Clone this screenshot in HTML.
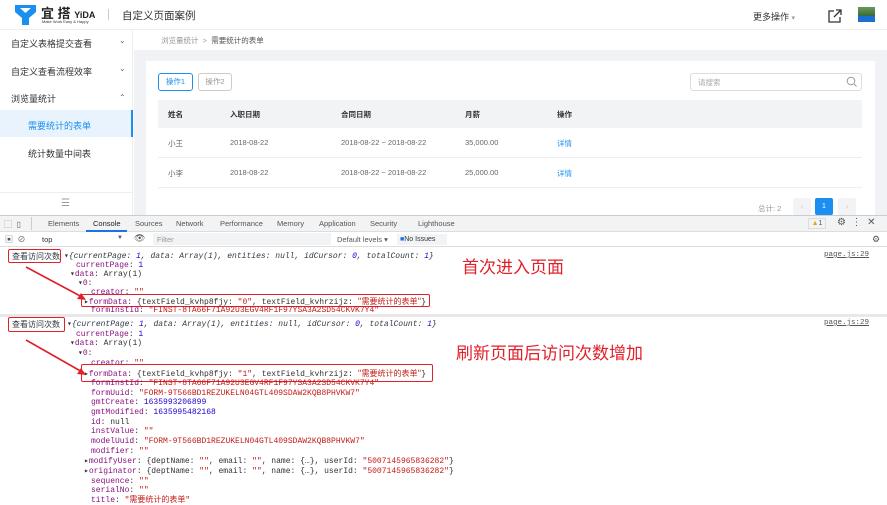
<!DOCTYPE html><html><head><meta charset="utf-8"><style>
*{margin:0;padding:0;box-sizing:border-box}
body{width:887px;height:500px;overflow:hidden;position:relative;background:#fff;font-family:"Liberation Sans","Noto Sans CJK SC",sans-serif;color:#333}
.a{position:absolute;white-space:nowrap}
.cn{font-size:9px}
.m{font-family:"Liberation Mono","DejaVu Sans Mono",monospace;font-size:8px;line-height:9px}
.k{color:#881280}.s{color:#c41a16}.n{color:#1c00cf}.g{color:#303942}
.box{position:absolute;border:1.5px solid #e0202a;border-radius:2px}
</style></head><body>
<div class="a" style="left:0;top:0;width:887px;height:30px;background:#fff;border-bottom:1px solid #eee"></div>
<svg class="a" style="left:15px;top:5px" width="21" height="20"><path d="M0 0h21v7l-7 6v7h-7v-7L0 7z" fill="#1b8ff0"/><path d="M5 3h11l-5.5 5z" fill="#fff"/></svg>
<div class="a" style="left:41px;top:3px;font-size:13px;font-weight:bold;color:#222">宜 搭 <span style="font-size:9px">YiDA</span></div>
<div class="a" style="left:42px;top:19px;font-size:4px;color:#333">Make Work Easy &amp; Happy</div>
<div class="a" style="left:108px;top:9px;width:1px;height:11px;background:#ccc"></div>
<div class="a" style="left:122px;top:8px;font-size:10.5px;color:#333">自定义页面案例</div>
<div class="a cn" style="left:753px;top:10px;color:#333">更多操作 <span style="color:#999;font-size:7px">▾</span></div>
<svg class="a" style="left:828px;top:9px" width="14" height="14"><path d="M6 2H1v11h11V8M8 1h5v5M13 1L6 8" fill="none" stroke="#333" stroke-width="1.3"/></svg>
<div class="a" style="left:858px;top:7px;width:17px;height:15px;background:linear-gradient(#6a9a5a,#3a6a3a 60%,#1b6fd0 60%)"></div>
<div class="a" style="left:0;top:30px;width:133px;height:185px;background:#fff;border-right:1px solid #eee"></div>
<div class="a cn" style="left:11px;top:37px">自定义表格提交查看</div><div class="a" style="left:119px;top:36px;font-size:8px;color:#666">⌄</div>
<div class="a cn" style="left:11px;top:65px">自定义查看流程效率</div><div class="a" style="left:119px;top:64px;font-size:8px;color:#666">⌄</div>
<div class="a cn" style="left:11px;top:92px">浏览量统计</div><div class="a" style="left:119px;top:93px;font-size:8px;color:#666">⌃</div>
<div class="a" style="left:0;top:110px;width:133px;height:27px;background:#e8f3fd;border-right:2px solid #1b8ff0"></div>
<div class="a cn" style="left:28px;top:119px;color:#1b8ff0">需要统计的表单</div>
<div class="a cn" style="left:28px;top:147px">统计数量中间表</div>
<div class="a" style="left:0;top:192px;width:133px;height:1px;background:#eee"></div>
<div class="a" style="left:61px;top:198px;font-size:10px;color:#999">☰</div>
<div class="a" style="left:134px;top:30px;width:753px;height:185px;background:#f0f2f5"></div>
<div class="a" style="left:134px;top:30px;width:753px;height:20px;background:#fff"></div>
<div class="a" style="left:161px;top:35px;font-size:7.5px;color:#999">浏览量统计 &nbsp;&gt;&nbsp; <span style="color:#555">需要统计的表单</span></div>
<div class="a" style="left:146px;top:61px;width:729px;height:154px;background:#fff"></div>
<div class="a" style="left:158px;top:73px;width:35px;height:18px;border:1px solid #1b8ff0;border-radius:3px;font-size:7.5px;color:#1b8ff0;text-align:center;line-height:16px">操作1</div>
<div class="a" style="left:198px;top:73px;width:34px;height:18px;border:1px solid #ccc;border-radius:3px;font-size:7.5px;color:#999;text-align:center;line-height:16px">操作2</div>
<div class="a" style="left:690px;top:73px;width:172px;height:18px;border:1px solid #ddd;border-radius:3px"></div>
<div class="a" style="left:698px;top:77px;font-size:7.5px;color:#aaa">请搜索</div>
<svg class="a" style="left:846px;top:76px" width="11" height="11"><circle cx="5" cy="5" r="3.8" fill="none" stroke="#999"/><path d="M8 8l2.5 2.5" stroke="#999"/></svg>
<div class="a" style="left:158px;top:100px;width:704px;height:28px;background:#f2f3f5"></div>
<div class="a" style="left:158px;top:157px;width:704px;height:1px;background:#eee"></div>
<div class="a" style="left:158px;top:187px;width:704px;height:1px;background:#eee"></div>
<div class="a" style="left:168px;top:109px;font-size:7.5px;font-weight:bold;color:#333">姓名</div>
<div class="a" style="left:230px;top:109px;font-size:7.5px;font-weight:bold;color:#333">入职日期</div>
<div class="a" style="left:341px;top:109px;font-size:7.5px;font-weight:bold;color:#333">合同日期</div>
<div class="a" style="left:465px;top:109px;font-size:7.5px;font-weight:bold;color:#333">月薪</div>
<div class="a" style="left:557px;top:109px;font-size:7.5px;font-weight:bold;color:#333">操作</div>
<div class="a" style="left:168px;top:138px;font-size:7.5px;color:#666">小王</div>
<div class="a" style="left:230px;top:138px;font-size:7.5px;color:#666">2018-08-22</div>
<div class="a" style="left:341px;top:138px;font-size:7.5px;color:#666">2018-08-22 ~ 2018-08-22</div>
<div class="a" style="left:465px;top:138px;font-size:7.5px;color:#666">35,000.00</div>
<div class="a" style="left:557px;top:138px;font-size:7.5px;color:#1b8ff0">详情</div>
<div class="a" style="left:168px;top:168px;font-size:7.5px;color:#666">小李</div>
<div class="a" style="left:230px;top:168px;font-size:7.5px;color:#666">2018-08-22</div>
<div class="a" style="left:341px;top:168px;font-size:7.5px;color:#666">2018-08-22 ~ 2018-08-22</div>
<div class="a" style="left:465px;top:168px;font-size:7.5px;color:#666">25,000.00</div>
<div class="a" style="left:557px;top:168px;font-size:7.5px;color:#1b8ff0">详情</div>
<div class="a" style="left:758px;top:203px;font-size:7.5px;color:#999">总计: 2</div>
<div class="a" style="left:793px;top:198px;width:18px;height:17px;background:#f2f3f5;border-radius:2px;color:#ccc;font-size:8px;text-align:center;line-height:17px">‹</div>
<div class="a" style="left:815px;top:198px;width:18px;height:17px;background:#1b8ff0;border-radius:2px;color:#fff;font-size:7px;text-align:center;line-height:17px">1</div>
<div class="a" style="left:838px;top:198px;width:18px;height:17px;background:#f2f3f5;border-radius:2px;color:#ccc;font-size:8px;text-align:center;line-height:17px">›</div>
<div class="a" style="left:0;top:215px;width:887px;height:17px;background:#f1f3f4;border-top:1px solid #ccc;border-bottom:1px solid #ddd"></div>
<div class="a" style="left:4px;top:219px;font-size:8px;color:#666">⬚ &nbsp;▯</div>
<div class="a" style="left:31px;top:217px;width:1px;height:13px;background:#ccc"></div>
<div class="a" style="left:48px;top:219px;font-size:7.5px;color:#555">Elements</div>
<div class="a" style="left:93px;top:219px;font-size:7.5px;color:#222">Console</div>
<div class="a" style="left:86px;top:230px;width:41px;height:2px;background:#1a73e8"></div>
<div class="a" style="left:135px;top:219px;font-size:7.5px;color:#555">Sources</div>
<div class="a" style="left:176px;top:219px;font-size:7.5px;color:#555">Network</div>
<div class="a" style="left:220px;top:219px;font-size:7.5px;color:#555">Performance</div>
<div class="a" style="left:277px;top:219px;font-size:7.5px;color:#555">Memory</div>
<div class="a" style="left:319px;top:219px;font-size:7.5px;color:#555">Application</div>
<div class="a" style="left:370px;top:219px;font-size:7.5px;color:#555">Security</div>
<div class="a" style="left:418px;top:219px;font-size:7.5px;color:#555">Lighthouse</div>
<div class="a" style="left:808px;top:218px;width:18px;height:11px;border:1px solid #ddd;font-size:7px;color:#555;text-align:center;line-height:9px"><span style="color:#e8a800">▲</span>1</div>
<div class="a" style="left:837px;top:217px;font-size:10px;color:#555">⚙ &nbsp;⋮ &nbsp;✕</div>
<div class="a" style="left:0;top:232px;width:887px;height:15px;background:#fff;border-bottom:1px solid #ddd"></div>
<div class="a" style="left:5px;top:234px;font-size:8px;color:#555">▣ &nbsp;⊘</div>
<div class="a" style="left:42px;top:235px;font-size:7.5px;color:#333">top</div>
<div class="a" style="left:117px;top:235px;font-size:6px;color:#555">▼</div>
<div class="a" style="left:134px;top:233px;font-size:9px;color:#555">👁</div>
<div class="a" style="left:153px;top:233px;width:178px;height:12px;background:#f1f3f4"></div>
<div class="a" style="left:157px;top:235px;font-size:7.5px;color:#999">Filter</div>
<div class="a" style="left:337px;top:235px;font-size:7.5px;color:#555">Default levels ▾</div>
<div class="a" style="left:397px;top:234px;width:50px;height:11px;background:#f1f3f4;font-size:7px;color:#333;line-height:11px;padding-left:3px"><span style="color:#1a73e8">■</span>No Issues</div>
<div class="a" style="left:872px;top:234px;font-size:9px;color:#555">⚙</div>
<div class="a" style="left:824px;top:251px;font-size:7.5px;color:#555;text-decoration:underline;font-family:'Liberation Mono',monospace">page.js:29</div>
<div class="a m g" style="left:12px;top:252px;font-family:'Liberation Sans','Noto Sans CJK SC',sans-serif">查看访问次数</div>
<div class="box" style="left:8px;top:249px;width:53px;height:14px"></div>
<div class="a m g" style="left:64px;top:252px;font-style:italic">▾{currentPage: <span class="n">1</span>, data: Array(1), entities: null, idCursor: <span class="n">0</span>, totalCount: <span class="n">1</span>}</div>
<div class="a m" style="left:76px;top:261px"><span class="k">currentPage</span>: <span class="n">1</span></div>
<div class="a m" style="left:70px;top:270px">▾<span class="k">data</span>: Array(1)</div>
<div class="a m" style="left:78px;top:279px">▾<span class="k">0</span>:</div>
<div class="a m" style="left:91px;top:288px"><span class="k">creator</span>: <span class="s">""</span></div>
<div class="a m" style="left:84px;top:297px">▸<span class="k">formData</span>: {textField_kvhp8fjy: <span class="s">"0"</span>, textField_kvhrzijz: <span class="s" style="font-family:'Noto Sans CJK SC',sans-serif">"需要统计的表单"</span>}</div>
<div class="box" style="left:81px;top:294px;width:349px;height:13px"></div>
<div class="a m" style="left:91px;top:306px"><span class="k">formInstId</span>: <span class="s">"FINST-8TA66F71A92U3EGV4RF1F97YSA3A2SD54CKVK7Y4"</span></div>
<svg class="a" style="left:20px;top:265px" width="70" height="40"><path d="M6 2L64 33" stroke="#e0202a" stroke-width="1.6"/><path d="M66 35l-9-1 4-6z" fill="#e0202a"/></svg>
<div class="a" style="left:462px;top:253px;font-size:17px;color:#e0202a;font-family:'Noto Sans CJK SC',sans-serif">首次进入页面</div>
<div class="a" style="left:0;top:314px;width:887px;height:3px;background:#e8e8e8"></div>
<div class="a" style="left:824px;top:319px;font-size:7.5px;color:#555;text-decoration:underline;font-family:'Liberation Mono',monospace">page.js:29</div>
<div class="a m g" style="left:12px;top:320px;font-family:'Liberation Sans','Noto Sans CJK SC',sans-serif">查看访问次数</div>
<div class="box" style="left:8px;top:317px;width:57px;height:15px"></div>
<div class="a m g" style="left:67px;top:320px;font-style:italic">▾{currentPage: <span class="n">1</span>, data: Array(1), entities: null, idCursor: <span class="n">0</span>, totalCount: <span class="n">1</span>}</div>
<div class="a m" style="left:76px;top:330px"><span class="k">currentPage</span>: <span class="n">1</span></div>
<div class="a m" style="left:70px;top:339px">▾<span class="k">data</span>: Array(1)</div>
<div class="a m" style="left:78px;top:349px">▾<span class="k">0</span>:</div>
<div class="a m" style="left:91px;top:359px"><span class="k">creator</span>: <span class="s">""</span></div>
<div class="a m" style="left:84px;top:369px">▸<span class="k">formData</span>: {textField_kvhp8fjy: <span class="s">"1"</span>, textField_kvhrzijz: <span class="s" style="font-family:'Noto Sans CJK SC',sans-serif">"需要统计的表单"</span>}</div>
<div class="box" style="left:81px;top:364px;width:352px;height:18px"></div>
<div class="a m" style="left:91px;top:379px"><span class="k">formInstId</span>: <span class="s">"FINST-8TA66F71A92U3EGV4RF1F97YSA3A2SD54CKVK7Y4"</span></div>
<div class="a m" style="left:91px;top:389px"><span class="k">formUuid</span>: <span class="s">"FORM-9T566BD1REZUKELN04GTL409SDAW2KQB8PHVKW7"</span></div>
<div class="a m" style="left:91px;top:398px"><span class="k">gmtCreate</span>: <span class="n">1635993206899</span></div>
<div class="a m" style="left:91px;top:408px"><span class="k">gmtModified</span>: <span class="n">1635995482168</span></div>
<div class="a m" style="left:91px;top:418px"><span class="k">id</span>: null</div>
<div class="a m" style="left:91px;top:427px"><span class="k">instValue</span>: <span class="s">""</span></div>
<div class="a m" style="left:91px;top:437px"><span class="k">modelUuid</span>: <span class="s">"FORM-9T566BD1REZUKELN04GTL409SDAW2KQB8PHVKW7"</span></div>
<div class="a m" style="left:91px;top:447px"><span class="k">modifier</span>: <span class="s">""</span></div>
<div class="a m" style="left:84px;top:457px">▸<span class="k">modifyUser</span>: {deptName: <span class="s">""</span>, email: <span class="s">""</span>, name: {…}, userId: <span class="s">"5007145965836282"</span>}</div>
<div class="a m" style="left:84px;top:467px">▸<span class="k">originator</span>: {deptName: <span class="s">""</span>, email: <span class="s">""</span>, name: {…}, userId: <span class="s">"5007145965836282"</span>}</div>
<div class="a m" style="left:91px;top:477px"><span class="k">sequence</span>: <span class="s">""</span></div>
<div class="a m" style="left:91px;top:486px"><span class="k">serialNo</span>: <span class="s">""</span></div>
<div class="a m" style="left:91px;top:496px"><span class="k">title</span>: <span class="s">"需要统计的表单"</span></div>
<svg class="a" style="left:20px;top:338px" width="70" height="42"><path d="M6 2L64 35" stroke="#e0202a" stroke-width="1.6"/><path d="M66 37l-9-1 4-6z" fill="#e0202a"/></svg>
<div class="a" style="left:456px;top:339px;font-size:17px;color:#e0202a;font-family:'Noto Sans CJK SC',sans-serif">刷新页面后访问次数增加</div>
</body></html>
